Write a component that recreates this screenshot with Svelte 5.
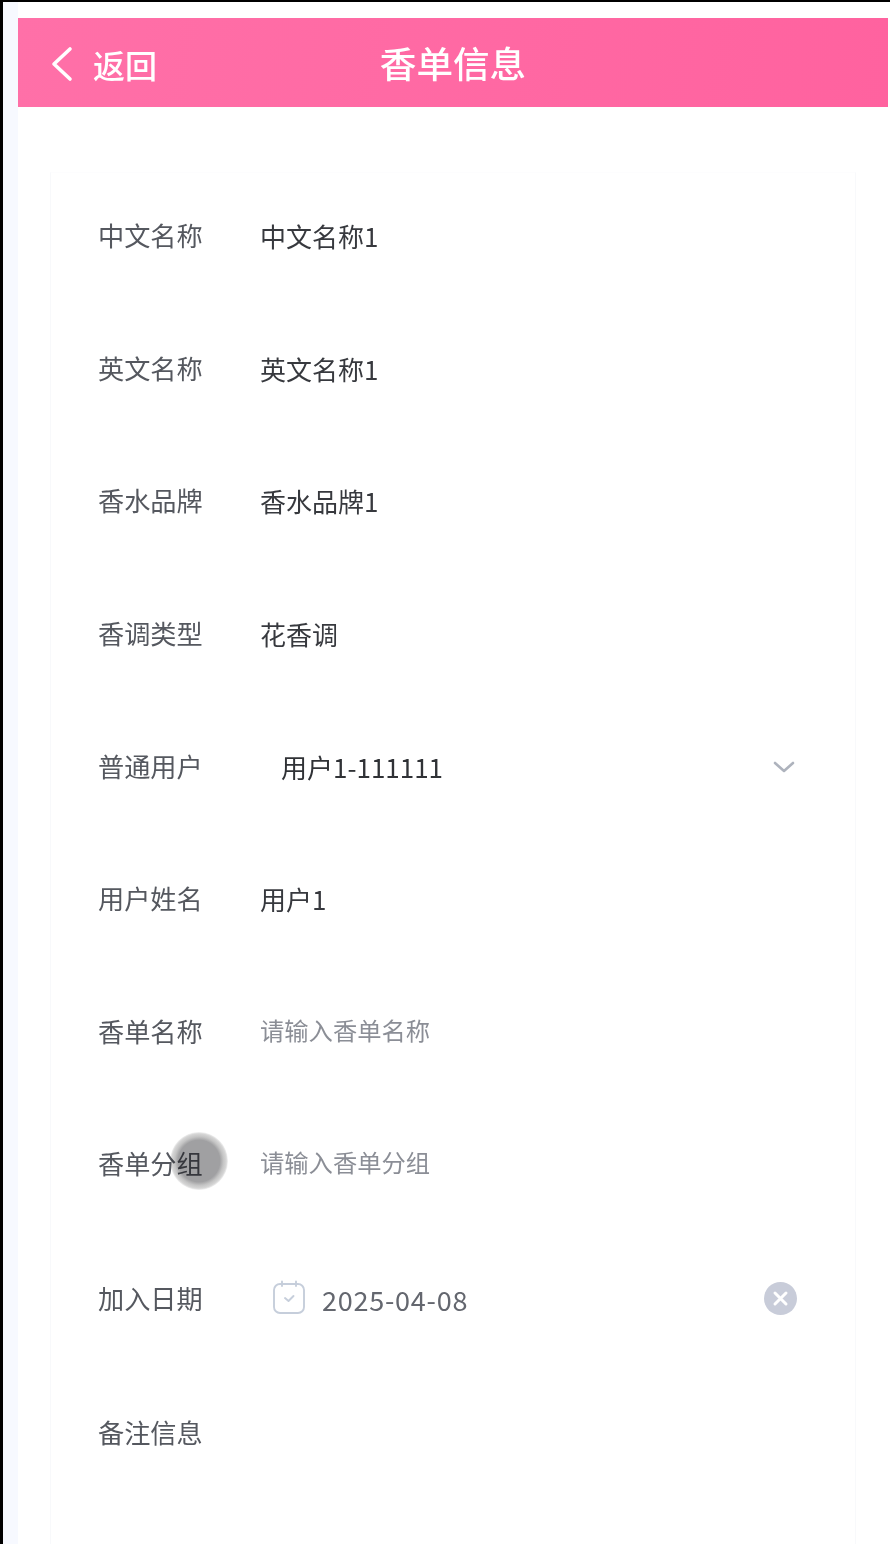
<script>
  const rows = [
    { label: '中文名称', value: '中文名称1' },
    { label: '英文名称', value: '英文名称1' },
    { label: '香水品牌', value: '香水品牌1' },
    { label: '香调类型', value: '花香调' },
    { label: '普通用户', value: '用户1-111111', kind: 'select' },
    { label: '用户姓名', value: '用户1' },
    { label: '香单名称', value: '请输入香单名称', kind: 'placeholder' },
    { label: '香单分组', value: '请输入香单分组', kind: 'placeholder' },
    { label: '加入日期', value: '2025-04-08', kind: 'date' },
    { label: '备注信息', value: '' }
  ];
</script>

<div class="frame">
  <div class="page">
    <header class="bar">
      <div class="back">
        <svg width="26" height="36" viewBox="0 0 26 36" fill="none" stroke="#fff" stroke-width="3.6" stroke-linecap="round" stroke-linejoin="round">
          <path d="M21 3 L5 18 L21 33" />
        </svg>
        <span>返回</span>
      </div>
      <h1>香单信息</h1>
    </header>

    <main class="card">
      {#each rows as row}
        <div class="row" class:tall={row.kind === 'date'}>
          <div class="label">{row.label}</div>
          {#if row.kind === 'select'}
            <div class="control select">
              <span class="value dark">{row.value}</span>
              <svg class="chev" width="24" height="14" viewBox="0 0 24 14" fill="none" stroke="#aeb3bd" stroke-width="2.6" stroke-linecap="round" stroke-linejoin="round">
                <path d="M3 3 L12 11 L21 3" />
              </svg>
            </div>
          {:else if row.kind === 'date'}
            <div class="control date">
              <svg class="cal" width="34" height="36" viewBox="0 0 34 36" fill="none" stroke="#c6cedb" stroke-width="1.9" stroke-linecap="round" stroke-linejoin="round">
                <rect x="2" y="4" width="30" height="29" rx="6" />
                <path d="M10 1.5 V6 M24 1.5 V6" />
                <path d="M13 18 L16.5 21 L21.5 16" />
              </svg>
              <span class="value muted">{row.value}</span>
              <span class="clear">
                <svg width="33" height="33" viewBox="0 0 33 33">
                  <circle cx="16.5" cy="16.5" r="16.5" fill="#c8ccd9" />
                  <path d="M11 11 L22 22 M22 11 L11 22" stroke="#fff" stroke-width="3" stroke-linecap="round" />
                </svg>
              </span>
            </div>
          {:else}
            <div class="value" class:placeholder={row.kind === 'placeholder'}>{row.value}</div>
          {/if}
        </div>
      {/each}
    </main>

    <div class="touch"></div>
  </div>
</div>

<style>
  :global(body) {
    margin: 0;
    background: #000;
  }
  .frame {
    height: 1544px;
    padding: 2px 0 0 3px;
    box-sizing: border-box;
    overflow: hidden;
  }
  .page {
    position: relative;
    height: 1542px;
    box-sizing: border-box;
    padding: 16px 2px 0 15px;
    background: linear-gradient(90deg, #f7f9ff 0, #f7f9ff 15px, #fff 15px);
    font-family: "Noto Sans CJK SC", "Noto Sans", sans-serif;
    filter: blur(0.7px);
    overflow: hidden;
  }
  .bar {
    position: relative;
    height: 89px;
    display: flex;
    align-items: center;
    justify-content: center;
    background: linear-gradient(100deg, #ff70a8, #ff629f);
    color: #fff;
  }
  .back {
    position: absolute;
    left: 31px;
    top: 28px;
    display: flex;
    align-items: center;
    gap: 18px;
    font-size: 32px;
    font-weight: 500;
    line-height: 36px;
  }
  h1 {
    margin: 0;
    font-size: 36.6px;
    font-weight: 500;
    line-height: 50px;
  }
  .card {
    margin: 65px 32px 0 32px;
    padding: 0 0 0 47px;
    border: 1px solid #f8f9fb;
    border-top-color: #fdfdfe;
    border-bottom: 0;
    height: 1400px;
    box-sizing: border-box;
    background: #fff;
  }
  .row {
    height: 132.6px;
    display: flex;
    align-items: center;
    padding-right: 58px;
    font-size: 26.2px;
  }
  .row.tall {
    height: 136px;
  }
  .row:first-child {
    margin-top: -4px;
  }
  .label {
    width: 162px;
    flex: none;
    color: #55585f;
    line-height: 36px;
  }
  .value {
    color: #37393e;
    font-size: 26px;
    line-height: 36px;
    margin-top: 2px;
  }
  .value.placeholder {
    color: #8b8e96;
    font-size: 24.3px;
    margin-top: -2px;
  }
  .control {
    flex: 1;
    display: flex;
    align-items: center;
  }
  .select {
    padding-left: 21px;
  }
  .dark {
    color: #303236;
  }
  .chev {
    margin-left: auto;
    margin-right: 1px;
    margin-top: 2px;
  }
  .date {
    padding-left: 12px;
  }
  .cal {
    margin-right: 16px;
  }
  .muted {
    color: #64676f;
    font-size: 27px;
    letter-spacing: 0.75px;
    margin-top: 5px;
  }
  .clear {
    margin-left: auto;
    display: flex;
    margin-top: 2px;
  }
  .touch {
    position: absolute;
    left: 167px;
    top: 1130px;
    width: 58px;
    height: 58px;
    border-radius: 50%;
    mix-blend-mode: multiply;
    background: radial-gradient(circle closest-side, #a0a0a2 0, #a0a0a2 72%, #c4c4c4 84%, #d6d6d6 94%, #f4f4f4 100%);
  }
</style>
